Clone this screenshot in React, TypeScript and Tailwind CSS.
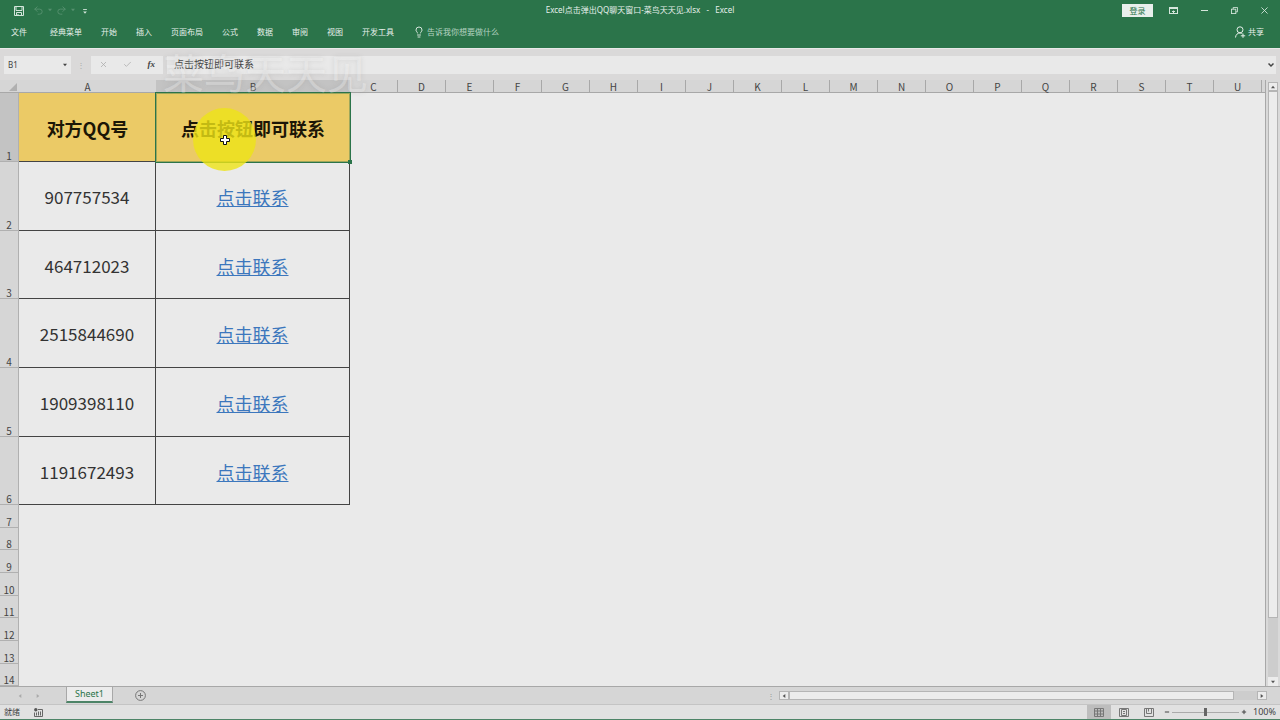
import React from 'react';
import { Lightbulb, Undo2, Redo2, X, Check, Minus, Plus } from 'lucide-react';

interface SheetRow {
  height: number;
  qq?: string;
}

const ribbonTabs = ['文件', '经典菜单', '开始', '插入', '页面布局', '公式', '数据', '审阅', '视图', '开发工具'];

const columns = 'CDEFGHIJKLMNOPQRSTU'.split('');

const rows: SheetRow[] = [
  { height: 69 },
  { height: 69, qq: '907757534' },
  { height: 68, qq: '464712023' },
  { height: 69, qq: '2515844690' },
  { height: 69, qq: '1909398110' },
  { height: 68, qq: '1191672493' },
  { height: 23 },
  { height: 22 },
  { height: 23 },
  { height: 23 },
  { height: 22 },
  { height: 23 },
  { height: 23 },
  { height: 22 }
];

function Arrow({ className, points }: { className: string; points: string }) {
  return (
    <svg viewBox="0 0 6 6" className={className} fill="currentColor">
      <polygon points={points} />
    </svg>
  );
}

function TitleBar() {
  return (
    <div className="grid h-5 grid-cols-[1fr_auto_1fr] items-center text-[#d5e6dc]">
      <div className="flex items-center pl-[14px]">
        <button aria-label="保存" className="mt-[2px]">
          <svg viewBox="0 0 10 10" className="h-[10px] w-[10px]" fill="none" stroke="currentColor">
            <path d="M0.5 0.5h9v9h-9zM2 0.5v4h6v-4M2.5 9.5v-3h5v3" />
            <path d="M4 8v1.5" />
          </svg>
        </button>
        <button aria-label="撤销" className="ml-[9px] flex items-center gap-1 opacity-25">
          <Undo2 className="h-[11px] w-[11px]" />
          <Arrow className="h-1 w-1" points="0,1 6,1 3,5" />
        </button>
        <button aria-label="恢复" className="ml-1 flex items-center gap-1 opacity-25">
          <Redo2 className="h-[11px] w-[11px]" />
          <Arrow className="h-1 w-1" points="0,1 6,1 3,5" />
        </button>
        <button aria-label="自定义快速访问工具栏" className="ml-2 pt-[2px]">
          <svg viewBox="0 0 6 8" className="h-[5px] w-1" fill="currentColor">
            <rect x="0" y="0" width="6" height="1.4" />
            <polygon points="0,4 6,4 3,7.5" />
          </svg>
        </button>
      </div>
      <h1 className="text-[8px] leading-5 whitespace-pre text-[#e6f0ea]">Excel点击弹出QQ聊天窗口-菜鸟天天见.xlsx   -   Excel</h1>
      <div className="flex items-center justify-end pr-3">
        <button className="mr-4 h-[13px] w-[31px] bg-[#e9efec] text-[8px] leading-[13px] text-[#2b744a]">登录</button>
        <button aria-label="功能区显示选项" className="mr-[23px]">
          <svg viewBox="0 0 9 7" className="h-[7px] w-[9px]" fill="none" stroke="currentColor">
            <rect x="0.5" y="0.5" width="8" height="6" />
            <path d="M0 1.5h9M4.5 6V3.5M3 4.5h3" />
          </svg>
        </button>
        <button aria-label="最小化" className="mr-[23px]">
          <svg viewBox="0 0 7 8" className="h-2 w-[7px]" stroke="currentColor">
            <path d="M0 4.5h7" />
          </svg>
        </button>
        <button aria-label="还原" className="mr-[23px]">
          <svg viewBox="0 0 8 8" className="h-[7px] w-[7px]" fill="none" stroke="currentColor">
            <rect x="0.5" y="2.5" width="5" height="5" />
            <path d="M2.5 2.5v-2h5v5h-2" />
          </svg>
        </button>
        <button aria-label="关闭">
          <svg viewBox="0 0 8 8" className="h-[7px] w-[7px]" stroke="currentColor">
            <path d="M0.5 0.5l7 7M7.5 0.5l-7 7" />
          </svg>
        </button>
      </div>
    </div>
  );
}

function Ribbon() {
  return (
    <nav className="flex h-7 items-center pb-1 pl-[11px] text-[8px] text-[#e6f0ea]">
      <button className="mr-[23px]">{ribbonTabs[0]}</button>
      <div className="flex gap-[19px]">
        {ribbonTabs.slice(1).map(tab => (
          <button key={tab}>{tab}</button>
        ))}
      </div>
      <button className="ml-[19px] flex items-center gap-[2px] text-[#b5d3c1]">
        <Lightbulb className="h-3 w-3 text-[#e6f0ea]" strokeWidth={1.8} />
        告诉我你想要做什么
      </button>
      <button className="mr-4 ml-auto flex items-center gap-[2px]">
        <svg viewBox="0 0 12 12" className="h-3 w-3" fill="none" stroke="currentColor">
          <circle cx="6" cy="3.8" r="3" />
          <path d="M1.5 11.5C1.8 8.6 3.5 7 6 7c1 0 1.8 0.3 2.4 0.8M6.8 9.8h4.4M9 7.6v4.2" />
        </svg>
        共享
      </button>
    </nav>
  );
}

function FormulaBar() {
  return (
    <div className="relative flex h-8 items-center border-t border-[#e9e9e9] bg-[#dad9d9] pr-1 pl-1 text-[#444]">
      <div className="flex h-[18px] w-[67px] items-center bg-[#e9e9e9] pr-1 pl-1">
        <input aria-label="名称框" defaultValue="B1" className="w-full min-w-0 bg-transparent text-[8px] outline-none" />
        <Arrow className="h-1 w-1 shrink-0" points="0,1 6,1 3,5" />
      </div>
      <span className="w-5 text-center text-[8px] leading-none text-[#aaa]">⋮</span>
      <div className="flex h-[18px] w-[72px] items-center justify-between bg-[#e9e9e9] px-2">
        <button aria-label="取消" className="text-[#aaa]">
          <X className="h-[9px] w-[9px]" />
        </button>
        <button aria-label="输入" className="text-[#aaa]">
          <Check className="h-[9px] w-[9px]" />
        </button>
        <button aria-label="插入函数" className="font-['Liberation_Serif',serif] text-[9px] leading-none font-bold italic">
          fx
        </button>
      </div>
      <div className="ml-1 flex h-[18px] flex-1 items-center bg-[#e9e9e9] pr-[2px] pl-[7px]">
        <input
          aria-label="编辑栏"
          defaultValue="点击按钮即可联系"
          className="h-full w-full bg-transparent pb-[2px] text-[10px] outline-none"
        />
        <svg viewBox="0 0 6 6" className="h-[6px] w-[6px] shrink-0" fill="none" stroke="currentColor" strokeWidth="1.5">
          <path d="M0.5 1.5l2.5 2.5l2.5-2.5" />
        </svg>
      </div>
      <div className="pointer-events-none absolute top-0 left-[163px] z-20 text-[41px] leading-[49px] whitespace-nowrap text-white/30 [text-shadow:0_0_5px_rgba(120,120,120,0.2)]">
        菜鸟天天见
      </div>
    </div>
  );
}

function Pointer() {
  return (
    <div className="pointer-events-none absolute top-[15px] left-[37px] flex h-[63px] w-[63px] items-center justify-center rounded-full bg-[#eee417]/80">
      <svg viewBox="0 0 12 12" className="h-3 w-3" fill="#fff" stroke="#111">
        <path d="M4.5 1.5h3v3h3v3h-3v3h-3v-3h-3v-3h3z" />
      </svg>
    </div>
  );
}

function Grid() {
  return (
    <main className="min-h-0 flex-1 overflow-hidden border-r border-[#a8a8a8] bg-[#eaeaea]">
      <table className="w-full table-fixed border-separate border-spacing-0 font-['Noto_Sans_CJK_SC',sans-serif]">
        <colgroup>
          <col className="w-[19px]" />
          <col className="w-[137px]" />
          <col className="w-[194px]" />
          {columns.map(name => (
            <col key={name} className="w-12" />
          ))}
          <col />
        </colgroup>
        <thead>
          <tr className="h-[13px] bg-[#d6d6d6] text-[10px] leading-[10px] text-[#444] *:border-b *:border-[#a8a8a8] *:p-0 *:pt-[2px] *:font-normal">
            <th aria-label="全选">
              <Arrow className="ml-auto mr-[2px] h-2 w-2 text-[#b0b0b0]" points="6,0 6,6 0,6" />
            </th>
            <th scope="col">A</th>
            <th scope="col" className="bg-[#c3c3c3]">B</th>
            {columns.map(name => (
              <th key={name} scope="col" className="border-r border-r-[#bcbcbc]">{name}</th>
            ))}
            <td />
          </tr>
        </thead>
        <tbody>
          {rows.map((row, i) => (
            <tr key={i} style={{ height: row.height }}>
              <th
                scope="row"
                className={`border-r border-b border-[#b0b0b0] p-0 align-bottom text-[10px] leading-[10px] font-normal text-[#444] ${i === 0 ? 'bg-[#c3c3c3]' : 'bg-[#d6d6d6]'}`}
              >
                {i + 1}
              </th>
              {i === 0 && (
                <>
                  <td className="border-b border-[#444] bg-[#ebca66] p-0 pt-[2px] text-center text-[18px] leading-6 font-bold text-[#1c1606]">对方QQ号</td>
                  <td className="relative bg-[#ebca66] p-0 pt-px text-center text-[18px] leading-6 font-bold text-[#1c1606] outline-1 outline-[#2b744a] inset-ring-1 inset-ring-[#2b744a]/40">
                    点击按钮即可联系
                    <Pointer />
                    <span className="absolute -right-[2px] -bottom-[2px] h-1 w-1 bg-[#2b744a]" />
                  </td>
                </>
              )}
              {row.qq && (
                <>
                  <td className="border-r border-b border-[#444] p-0 pt-[2px] text-center text-[17px] leading-6 text-[#333]">{row.qq}</td>
                  <td className="border-r border-b border-[#444] p-0 pt-[2px] text-center text-[18px] leading-6">
                    <a href="#" className="text-[#3c77bd] underline">点击联系</a>
                  </td>
                </>
              )}
            </tr>
          ))}
        </tbody>
      </table>
    </main>
  );
}

function VerticalScroll() {
  return (
    <div className="flex w-[14px] flex-col items-center bg-[#d9d9d9] pt-[2px] text-[#555]">
      <button aria-label="向上滚动" className="flex h-[9px] w-[10px] items-center justify-center border border-[#b5b5b5] bg-[#ececec]">
        <Arrow className="h-1 w-1" points="0,5 6,5 3,1" />
      </button>
      <div className="w-[10px] flex-1 bg-[#cdcdcd]">
        <div className="h-[90%] border border-[#b5b5b5] bg-[#ececec]" />
      </div>
      <button aria-label="向下滚动" className="flex h-[9px] w-[10px] items-center justify-center bg-[#ececec]">
        <Arrow className="h-1 w-1" points="0,1 6,1 3,5" />
      </button>
    </div>
  );
}

function SheetTabs() {
  return (
    <div className="flex h-[18px] items-center border-t border-[#a8a8a8] bg-[#d6d6d6] text-[#555]">
      <Arrow className="ml-[18px] h-1 w-1 text-[#aaa]" points="5,0 5,6 1,3" />
      <Arrow className="ml-[14px] h-1 w-1 text-[#aaa]" points="1,0 1,6 5,3" />
      <button className="ml-[26px] h-4 w-[47px] self-start border-x border-b-2 border-x-[#a8a8a8] border-b-[#4d8467] bg-[#ececec] text-[9px] leading-[14px] text-[#2b744a]">
        Sheet1
      </button>
      <button aria-label="新工作表" className="ml-[22px]">
        <svg viewBox="0 0 11 11" className="h-[11px] w-[11px]" fill="none" stroke="#777">
          <circle cx="5.5" cy="5.5" r="4.9" />
          <path d="M5.5 3v5M3 5.5h5" />
        </svg>
      </button>
      <div className="mr-[13px] ml-auto flex w-[500px] items-center">
        <span className="w-3 text-[8px] leading-none text-[#999]">⋮</span>
        <button aria-label="向左滚动" className="flex h-[9px] w-[10px] items-center justify-center border border-[#b5b5b5] bg-[#ececec]">
          <Arrow className="h-1 w-1" points="5,0 5,6 1,3" />
        </button>
        <div className="h-[9px] flex-1 bg-[#cdcdcd]">
          <div className="h-full w-[95%] border border-[#b5b5b5] bg-[#ececec]" />
        </div>
        <button aria-label="向右滚动" className="flex h-[9px] w-[10px] items-center justify-center border border-[#b5b5b5] bg-[#ececec]">
          <Arrow className="h-1 w-1" points="1,0 1,6 5,3" />
        </button>
      </div>
    </div>
  );
}

function StatusBar() {
  return (
    <footer className="flex h-4 items-center border-t border-b border-t-[#c4c4c4] border-b-[#4d8467] bg-[#e1e1e1] pl-1 text-[8px] text-[#444]">
      <span>就绪</span>
      <button aria-label="录制宏" className="ml-[14px]">
        <svg viewBox="0 0 9 9" className="h-[9px] w-[9px]" fill="none" stroke="#666">
          <path d="M4 1.5h4.5v7h-8v-4M2.5 4.5v3M4.5 3.5v4M6.5 3.5v4" />
          <circle cx="1.8" cy="1.8" r="1.7" fill="#555" stroke="none" />
        </svg>
      </button>
      <div className="ml-auto flex h-full items-center">
        <button aria-label="普通" className="flex h-full w-6 items-center justify-center bg-[#bdbdbd]">
          <svg viewBox="0 0 10 9" className="h-[9px] w-[10px]" fill="none" stroke="#777">
            <path d="M0.5 0.5h9v8h-9zM3.5 0v9M6.5 0v9M0 3h10M0 6h10" />
          </svg>
        </button>
        <button aria-label="页面布局视图" className="ml-2">
          <svg viewBox="0 0 10 9" className="h-[9px] w-[10px]" fill="none" stroke="#777">
            <path d="M0.5 0.5h9v8h-9zM2.5 1.5h5v6h-5zM4 3.5h2M4 5.5h2" />
          </svg>
        </button>
        <button aria-label="分页预览" className="ml-[15px]">
          <svg viewBox="0 0 10 9" className="h-[9px] w-[10px]" fill="none" stroke="#777">
            <path d="M0.5 0.5h9v8h-9zM2.5 0.5v5h5v-5M4.5 0.5v3" />
          </svg>
        </button>
        <button aria-label="缩小" className="ml-[10px]">
          <Minus className="h-[6px] w-[6px]" strokeWidth={4} />
        </button>
        <input
          type="range"
          aria-label="显示比例"
          defaultValue={50}
          className="mx-[2px] h-2 w-[67px] appearance-none bg-transparent [&::-webkit-slider-runnable-track]:h-px [&::-webkit-slider-runnable-track]:bg-[#aaa] [&::-webkit-slider-thumb]:-mt-[4px] [&::-webkit-slider-thumb]:h-2 [&::-webkit-slider-thumb]:w-[3px] [&::-webkit-slider-thumb]:appearance-none [&::-webkit-slider-thumb]:bg-[#666]"
        />
        <button aria-label="放大">
          <Plus className="h-[6px] w-[6px]" strokeWidth={4} />
        </button>
        <span className="mr-1 ml-[6px] text-[9px]">100%</span>
      </div>
    </footer>
  );
}

function App() {
  return (
    <div className="flex h-screen flex-col overflow-hidden font-['Noto_Sans','Noto_Sans_CJK_SC',sans-serif]">
      <header className="bg-[#2b744a]">
        <TitleBar />
        <Ribbon />
      </header>
      <FormulaBar />
      <div className="flex min-h-0 flex-1">
        <Grid />
        <VerticalScroll />
      </div>
      <SheetTabs />
      <StatusBar />
    </div>
  );
}

export default App;
